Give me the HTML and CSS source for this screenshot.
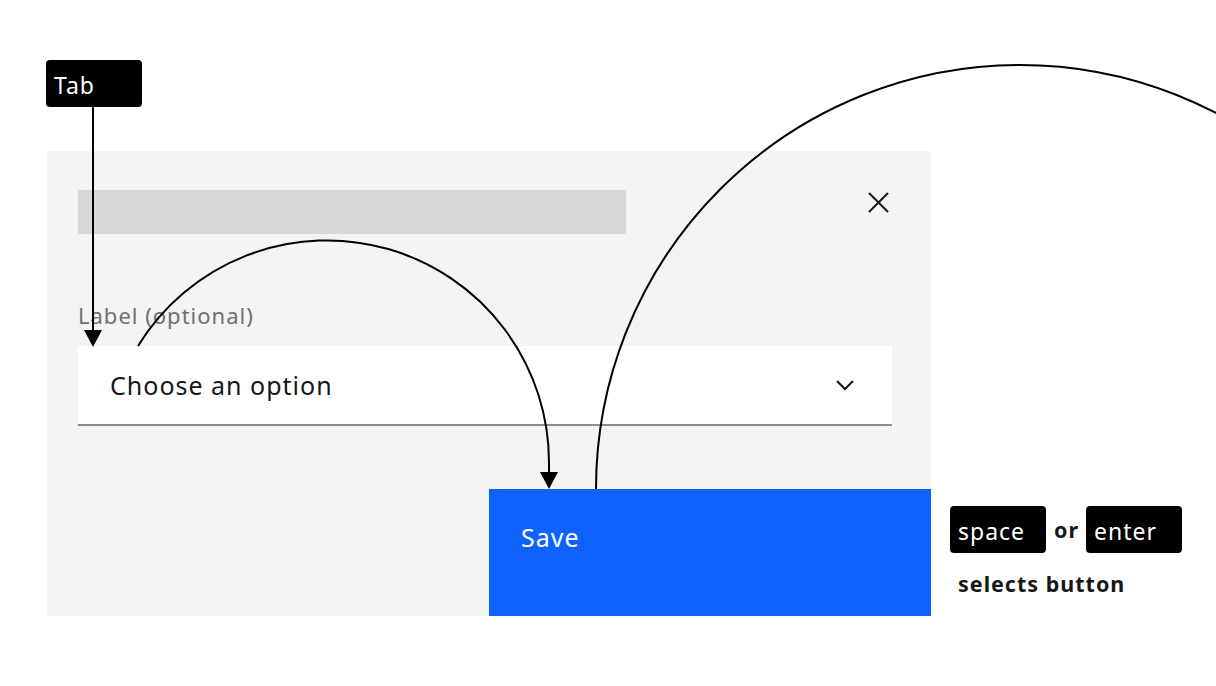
FILE: index.html
```html
<!DOCTYPE html>
<html lang="en">
<head>
    <meta charset="UTF-8">
    <title>Dropdown keyboard flow</title>
    <link rel="stylesheet" href="styles.css">
</head>
<body>

<div class="stage">
    <!-- Tab key -->
    <div class="key key-tab">Tab</div>

    <div class="row">
        <!-- Modal -->
        <div class="modal">
            <div class="modal-header">
                <div class="title-bar"></div>
                <svg class="close-icon" width="21" height="21" viewBox="0 0 21 21">
                    <path d="M1 1 L20 20 M20 1 L1 20" stroke="#161616" stroke-width="2" fill="none"/>
                </svg>
            </div>
            <div class="field">
                <label class="field-label">Label (optional)</label>
                <div class="select">
                    <span>Choose an option</span>
                    <svg width="18" height="12" viewBox="0 0 18 12">
                        <path d="M1 2 L9 10 L17 2" stroke="#161616" stroke-width="2" fill="none"/>
                    </svg>
                </div>
            </div>
            <div class="modal-footer">
                <button class="btn-primary">Save</button>
            </div>
        </div>

        <!-- Keys legend -->
        <div class="legend">
            <div class="legend-keys">
                <div class="key">space</div>
                <span class="legend-or">or</span>
                <div class="key">enter</div>
            </div>
            <p class="legend-text">selects button</p>
        </div>
    </div>

    <!-- Focus flow arrows -->
    <svg class="flow" width="1216" height="686" viewBox="0 0 1216 686">
        <g stroke="#000" stroke-width="2" fill="none">
            <path d="M93 107 L93 331"/>
            <path d="M138 346 A222 222 0 0 1 549 464 L549 473"/>
            <path d="M596 489 A424 424 0 0 1 1444 489"/>
        </g>
        <g fill="#000">
            <path d="M84 330 L102 330 L93 347 Z"/>
            <path d="M540 472 L558 472 L549 489 Z"/>
        </g>
    </svg>
</div>

</body>
</html>
```

FILE: styles.css
```css
body {
    margin: 0;
    background-color: #fff;
    font-family: "Noto Sans", Arial, sans-serif;
    letter-spacing: 1px;
    color: #161616;
}
.stage {
    position: relative;
    width: 1216px;
    height: 686px;
    padding: 60px 0 0 46px;
    box-sizing: border-box;
}
.key {
    background-color: #000;
    color: #fff;
    border-radius: 4px;
    height: 47px;
    width: 96px;
    box-sizing: border-box;
    padding-left: 8px;
    font-size: 23px;
    line-height: 50px;
}
.row {
    display: flex;
    margin-top: 44px;
    margin-left: 1px;
}
.modal {
    width: 884px;
    height: 465px;
    background-color: #f4f4f4;
    display: flex;
    flex-direction: column;
}
.modal-header {
    display: flex;
    justify-content: space-between;
    align-items: flex-start;
    padding: 39px 42px 0 31px;
}
.title-bar {
    width: 548px;
    height: 44px;
    background-color: #d8d8d8;
}
.close-icon {
    margin-top: 2px;
}
.field {
    padding: 68px 39px 0 31px;
}
.field-label {
    display: block;
    font-size: 22px;
    color: #6f6f6f;
    height: 44px;
    line-height: 26px;
}
.select {
    height: 78px;
    background-color: #fff;
    border-bottom: 2px solid #8d8d8d;
    display: flex;
    align-items: center;
    justify-content: space-between;
    padding: 0 38px 0 32px;
    font-size: 25px;
}
.modal-footer {
    margin-top: auto;
    display: flex;
    justify-content: flex-end;
}
.btn-primary {
    width: 442px;
    height: 127px;
    background-color: #0f62fe;
    color: #fff;
    border: none;
    font-family: inherit;
    letter-spacing: inherit;
    font-size: 25px;
    text-align: left;
    padding: 0 0 32px 32px;
}
.legend {
    margin: 355px 0 0 19px;
}
.legend-keys {
    display: flex;
    align-items: center;
}
.legend-or {
    font-weight: bold;
    font-size: 21.5px;
    margin: 0 7px 0 8px;
}
.legend-text {
    margin: 16px 0 0 8px;
    font-weight: bold;
    font-size: 21.5px;
}
.flow {
    position: absolute;
    top: 0;
    left: 0;
}
```
